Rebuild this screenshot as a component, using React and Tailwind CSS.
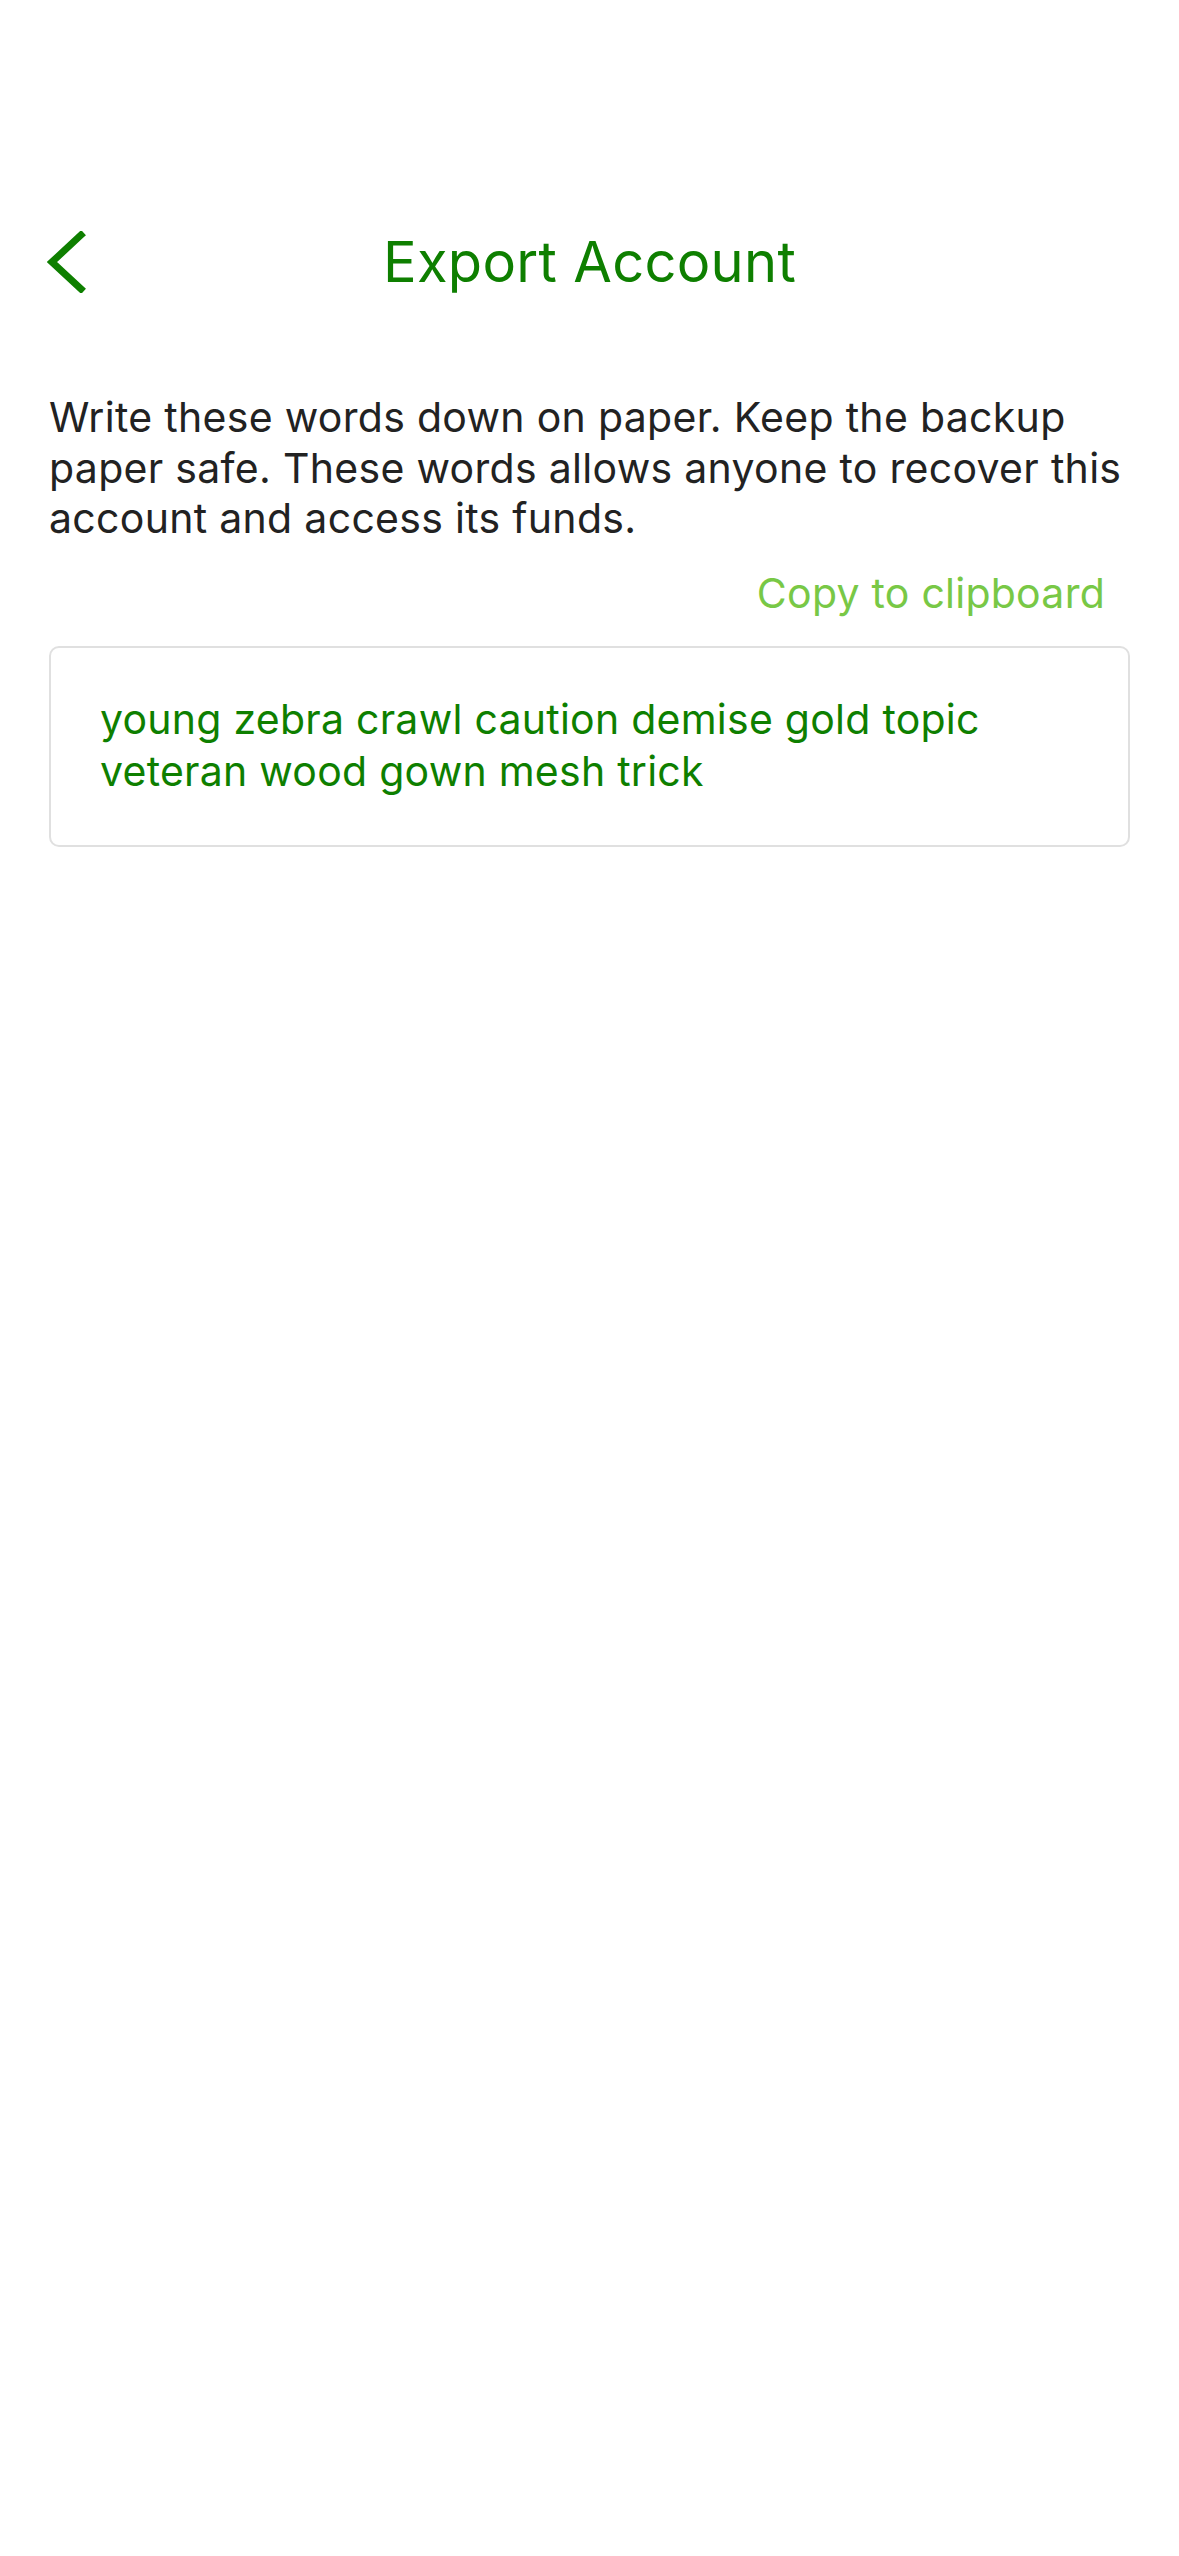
export default function App() {
  return (
    <div className="min-h-[2556px] w-full bg-white font-['Inter','Noto_Sans',sans-serif]">
      <div className="pt-[222px] px-[49px]">
        <div className="grid h-[80px] grid-cols-[1fr_auto_1fr] items-center">
          <div className="flex items-center">
            <svg width="40" height="62" viewBox="0 0 40 62" className="-ml-[2px]">
              <polyline
                points="34,4 5,31 34,58"
                fill="none"
                stroke="#0e7f00"
                strokeWidth="7"
                strokeLinecap="square"
                strokeLinejoin="miter"
              />
            </svg>
          </div>
          <h1 className="text-[56px] leading-[80px] font-normal text-[#0e7f00] tracking-[0.3px]">
            Export Account
          </h1>
          <div />
        </div>

        <p className="mt-[90px] text-[41px] leading-[50.5px] text-[#222222] tracking-[0.3px]">
          Write these words down on paper. Keep the backup paper safe. These words allows anyone to recover this account and access its funds.
        </p>

        <div className="mt-[24px] flex justify-end pr-[25px]">
          <span className="text-[41px] leading-[50px] text-[#78c846] tracking-[0.25px]">
            Copy to clipboard
          </span>
        </div>

        <div className="mt-[28px] rounded-[10px] border-2 border-[#e0e0e0] pl-[49px] pr-[40px] pt-[45px] pb-[48px]">
          <p className="text-[41px] leading-[52px] text-[#0e7f00] tracking-[0.25px]">
            young zebra crawl caution demise gold topic veteran wood gown mesh trick
          </p>
        </div>
      </div>
    </div>
  );
}
